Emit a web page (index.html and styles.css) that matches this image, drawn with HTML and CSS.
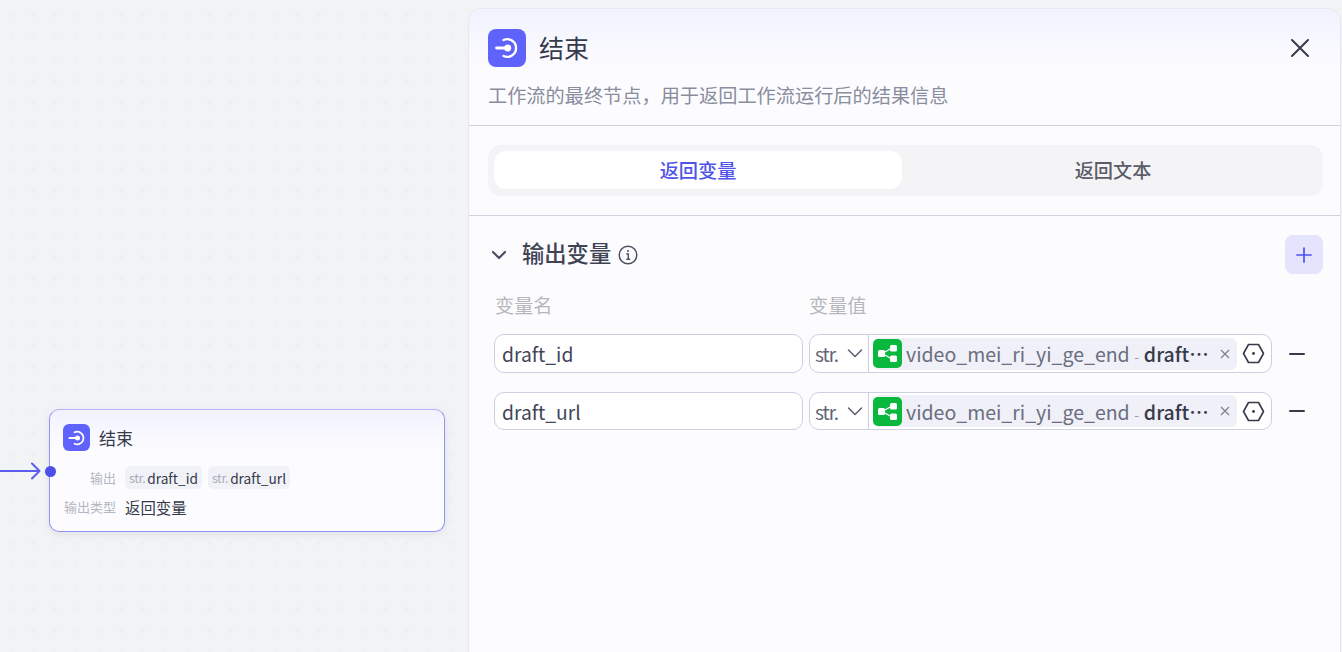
FILE: index.html
```html
<!DOCTYPE html>
<html lang="zh">
<head>
<meta charset="utf-8">
<title>结束</title>
<link rel="stylesheet" href="styles.css">
</head>
<body>
<main class="app">
  <section class="canvas">
    <svg class="edge" width="44" height="20" viewBox="0 0 44 20" fill="none" stroke="#5b5cf0" stroke-width="2" stroke-linecap="round" stroke-linejoin="round"><path d="M0 10H39M32 2.500L39.500 10L32 17.500"/></svg>
    <article class="node">
      <span class="port"></span>
      <header class="node-head">
        <span class="node-icon"><svg width="20" height="20" viewBox="0 0 20 20" fill="none"><path d="M2.500 10H10" stroke="#fff" stroke-width="2" stroke-linecap="round"/><circle cx="10.500" cy="10" r="2.500" fill="#fff"/><path d="M7.500 4.300A6.300 6.300 0 1 1 7.500 15.700" stroke="#fff" stroke-width="1.700" stroke-linecap="round"/></svg></span>
        <span class="node-title">结束</span>
      </header>
      <div class="node-row">
        <span class="node-label">输出</span>
        <div class="tags">
          <span class="tag"><i>str.</i>draft_id</span>
          <span class="tag"><i>str.</i>draft_url</span>
        </div>
      </div>
      <div class="node-row node-row-type">
        <span class="node-label">输出类型</span>
        <span class="node-value">返回变量</span>
      </div>
    </article>
  </section>

  <aside class="panel">
    <header class="panel-head">
      <div class="panel-title-row">
        <span class="panel-icon"><svg width="28" height="28" viewBox="0 0 20 20" fill="none"><path d="M2.500 10H10" stroke="#fff" stroke-width="2" stroke-linecap="round"/><circle cx="10.500" cy="10" r="2.500" fill="#fff"/><path d="M7.500 4.300A6.300 6.300 0 1 1 7.500 15.700" stroke="#fff" stroke-width="1.700" stroke-linecap="round"/></svg></span>
        <h1 class="panel-title">结束</h1>
        <svg class="close" width="20" height="20" viewBox="0 0 20 20" fill="none" stroke="#363a4a" stroke-width="2" stroke-linecap="round"><path d="M2 2L18 18M18 2L2 18"/></svg>
      </div>
      <p class="panel-desc">工作流的最终节点，用于返回工作流运行后的结果信息</p>
    </header>

    <div class="tabs-wrap">
      <div class="tabs">
        <span class="tab tab-active">返回变量</span>
        <span class="tab tab-rest">返回文本</span>
      </div>
    </div>

    <section class="vars">
      <div class="vars-head">
        <svg class="chev" width="16" height="10" viewBox="0 0 16 10" fill="none" stroke="#4b5063" stroke-width="2.200" stroke-linecap="round" stroke-linejoin="round"><path d="M2 2L8 8L14 2"/></svg>
        <h2 class="vars-title">输出变量</h2>
        <svg class="info" width="20" height="20" viewBox="0 0 20 20" fill="none" stroke="#4b5063" stroke-width="1.500"><circle cx="10" cy="10" r="8.800"/><path d="M8.300 9H10.300V14.300M8.300 14.300H12.200" stroke-width="1.400"/><circle cx="10" cy="6" r="1" fill="#4b5063" stroke="none"/></svg>
        <button class="add" type="button"><svg width="16" height="16" viewBox="0 0 16 16" fill="none" stroke="#4f50f5" stroke-width="1.700" stroke-linecap="round"><path d="M8 1V15M1 8H15"/></svg></button>
      </div>
      <div class="cols">
        <span class="col-name">变量名</span>
        <span>变量值</span>
      </div>
      <div class="var-row">
        <div class="name-input">draft_id</div>
        <div class="value-box">
          <div class="type-sel"><span class="type-text">str.</span><svg width="16" height="9" viewBox="0 0 16 9" fill="none" stroke="#5a5e6e" stroke-width="1.500" stroke-linecap="round" stroke-linejoin="round"><path d="M1.500 1L8 7.500L14.500 1"/></svg></div>
          <div class="chip">
            <span class="chip-icon"><svg width="21" height="21" viewBox="0 0 21 21" fill="#fff"><rect x="1" y="7" width="7" height="7" rx="1.500"/><rect x="13" y="2" width="7" height="6.500" rx="1.500"/><rect x="13" y="12.500" width="7" height="6.500" rx="1.500"/><path d="M7 9.500L14 5.500M7 11.500L14 15.500" stroke="#fff" stroke-width="1.400"/></svg></span>
            <span class="chip-text">video_mei_ri_yi_ge_end<em> - </em><b>draft…</b></span>
            <svg class="chip-x" width="10" height="10" viewBox="0 0 10 10" fill="none" stroke="#80838f" stroke-width="1.300"><path d="M1 1L9 9M9 1L1 9"/></svg>
          </div>
          <svg class="hex" width="23" height="21" viewBox="0 0 23 21" fill="none" stroke="#363a4a" stroke-width="1.600" stroke-linejoin="round"><path d="M6.500 1.500H16.500L21.500 10.500L16.500 19.500H6.500L1.500 10.500Z"/><circle cx="11.500" cy="10.500" r="1.400" fill="#363a4a" stroke="none"/></svg>
        </div>
        <svg class="minus" width="16" height="2" viewBox="0 0 16 2"><rect width="16" height="2" rx="1" fill="#363a4a"/></svg>
      </div>
      <div class="var-row var-row-second">
        <div class="name-input">draft_url</div>
        <div class="value-box">
          <div class="type-sel"><span class="type-text">str.</span><svg width="16" height="9" viewBox="0 0 16 9" fill="none" stroke="#5a5e6e" stroke-width="1.500" stroke-linecap="round" stroke-linejoin="round"><path d="M1.500 1L8 7.500L14.500 1"/></svg></div>
          <div class="chip">
            <span class="chip-icon"><svg width="21" height="21" viewBox="0 0 21 21" fill="#fff"><rect x="1" y="7" width="7" height="7" rx="1.500"/><rect x="13" y="2" width="7" height="6.500" rx="1.500"/><rect x="13" y="12.500" width="7" height="6.500" rx="1.500"/><path d="M7 9.500L14 5.500M7 11.500L14 15.500" stroke="#fff" stroke-width="1.400"/></svg></span>
            <span class="chip-text">video_mei_ri_yi_ge_end<em> - </em><b>draft…</b></span>
            <svg class="chip-x" width="10" height="10" viewBox="0 0 10 10" fill="none" stroke="#80838f" stroke-width="1.300"><path d="M1 1L9 9M9 1L1 9"/></svg>
          </div>
          <svg class="hex" width="23" height="21" viewBox="0 0 23 21" fill="none" stroke="#363a4a" stroke-width="1.600" stroke-linejoin="round"><path d="M6.500 1.500H16.500L21.500 10.500L16.500 19.500H6.500L1.500 10.500Z"/><circle cx="11.500" cy="10.500" r="1.400" fill="#363a4a" stroke="none"/></svg>
        </div>
        <svg class="minus" width="16" height="2" viewBox="0 0 16 2"><rect width="16" height="2" rx="1" fill="#363a4a"/></svg>
      </div>
    </section>
  </aside>
</main>
</body>
</html>
```
FILE: styles.css
```css
* { box-sizing: border-box; }
html, body { margin: 0; height: 100%; overflow: hidden; }
body {
  font-family: "Noto Sans CJK SC", "Noto Sans", sans-serif;
  background: #f2f3f5;
  color: #363a4a;
}
.app { display: flex; width: 1342px; height: 652px; }

/* canvas */
.canvas {
  position: relative;
  width: 468px;
  flex: none;
  background-color: #f2f3f5;
  background-image: radial-gradient(circle, #eeeff1 1.400px, transparent 2px);
  background-size: 22px 22px;
  background-position: 0 4px;
}
.edge { position: absolute; left: 0; top: 461px; }
.node {
  position: absolute;
  left: 49px;
  top: 409px;
  width: 396px;
  height: 123px;
  padding: 14px 14px 0 13px;
  border: 1px solid #9393f5;
  border-top-color: #b4b4f8;
  border-radius: 10px;
  background: linear-gradient(#f2f2ff 0, #fcfcff 40px);
  box-shadow: 0 2px 8px rgba(30, 30, 80, .08);
}
.port {
  position: absolute;
  left: -5px;
  top: 56px;
  width: 11px;
  height: 11px;
  border-radius: 50%;
  background: #4d50e8;
}
.node-head { display: flex; align-items: center; gap: 9px; height: 27px; }
.node-icon {
  width: 27px;
  height: 27px;
  border-radius: 6px;
  background: #5f62fb;
  display: flex;
  align-items: center;
  justify-content: center;
}
.node-title { font-size: 17px; line-height: 27px; color: #363a4a; }
.node-row {
  display: grid;
  grid-template-columns: 53px 1fr;
  column-gap: 9px;
  align-items: center;
  margin-top: 15px;
  height: 23px;
}
.node-row-type { margin-top: 6px; }
.node-label { font-size: 13px; color: #b4b6c2; text-align: right; white-space: nowrap; }
.tags { display: flex; gap: 6px; }
.tag {
  display: inline-flex;
  align-items: center;
  height: 23px;
  padding: 0 4px;
  border-radius: 5px;
  background: #f1f2f8;
  font-size: 13.700px;
  color: #363a4a;
  white-space: nowrap;
}
.tag i { font-style: normal; color: #a9acbd; margin-right: 2px; font-size: 12.500px; letter-spacing: -.4px; }
.node-value { font-size: 15.400px; color: #363a4a; white-space: nowrap; }

/* panel */
.panel {
  width: 873px;
  flex: none;
  margin-top: 8px;
  height: 644px;
  border: 1px solid #e6e7f0;
  border-bottom: 0;
  border-radius: 14px 14px 0 0;
  background: #fcfcff;
}
.panel-head {
  height: 117px;
  padding: 19px 19px 0;
  border-bottom: 1px solid #d2d2de;
  background: linear-gradient(#f2f2ff 0, #fcfcff 62px);
  border-radius: 14px 14px 0 0;
}
.panel-title-row { display: flex; align-items: center; height: 39px; }
.panel-icon {
  width: 38px;
  height: 38px;
  border-radius: 8px;
  background: #5f62fb;
  display: flex;
  align-items: center;
  justify-content: center;
  flex: none;
}
.panel-title { margin: 0 0 0 13px; flex: 1; font-size: 25px; font-weight: 400; line-height: 39px; color: #363a4a; }
.close { margin-right: 11px; }
.panel-desc { margin: 14px 0 0; font-size: 19.200px; line-height: 28px; color: #8a8d9d; white-space: nowrap; }

.tabs-wrap { height: 90px; padding: 19px 17px 0 19px; border-bottom: 1px solid #d2d2de; }
.tabs {
  display: flex;
  height: 51px;
  padding: 6px;
  border-radius: 13px;
  background: #f4f4f6;
}
.tab {
  flex: 1;
  display: flex;
  align-items: center;
  justify-content: center;
  height: 38px;
  padding-bottom: 1px;
  font-size: 19.200px;
  font-weight: 500;
  color: #5a5c68;
}
.tab-rest { padding-left: 7px; }
.tab-active { flex: none; width: 408px; background: #fff; border-radius: 12px; color: #5054ea; }

.vars { padding: 19px 17px 0 19px; }
.vars-head { display: flex; align-items: center; height: 39px; }
.chev { margin-left: 3px; }
.vars-title { margin: 0 0 0 15px; font-size: 22.300px; font-weight: 500; color: #3f4354; line-height: 35px; height: 39px; }
.info { margin-left: 7px; }
.add {
  margin-left: auto;
  width: 38px;
  height: 39px;
  padding: 0;
  border: 0;
  border-radius: 8px;
  background: #e4e4fc;
  display: flex;
  align-items: center;
  justify-content: center;
}
.cols { display: flex; margin-top: 17px; height: 29px; font-size: 19.200px; line-height: 28px; color: #b6b6bc; }
.col-name { width: 321px; padding-left: 7px; }
.var-row { display: flex; align-items: center; height: 39px; padding-left: 6px; }
.cols + .var-row { margin-top: 14px; }
.var-row-second { height: 38px; margin-top: 19px; }
.name-input {
  width: 309px;
  height: 100%;
  padding-left: 7px;
  border: 1px solid #cdcfe2;
  border-radius: 10px;
  background: #fff;
  font-size: 19.300px;
  line-height: 38px;
  color: #414557;
}
.value-box {
  display: flex;
  align-items: center;
  width: 463px;
  height: 100%;
  margin-left: 6px;
  border: 1px solid #cdcfe2;
  border-radius: 10px;
  background: #fff;
}
.type-sel {
  display: flex;
  align-items: center;
  justify-content: space-between;
  width: 59px;
  height: 100%;
  padding: 0 5px;
  flex: none;
  border-right: 1px solid #cdcfe2;
  font-size: 19px;
  color: #5f6373;
}
.type-text { letter-spacing: -1px; }
.chip {
  display: flex;
  align-items: center;
  width: 364px;
  height: 32px;
  margin-left: 4px;
  flex: none;
  border-radius: 6px;
  background: #f0f0f8;
  font-size: 19.500px;
  white-space: nowrap;
}
.chip-icon {
  width: 29px;
  height: 29px;
  flex: none;
  border-radius: 5px;
  background: #0ab83e;
  display: flex;
  align-items: center;
  justify-content: center;
}
.chip-text { margin-left: 4px; flex: 1; color: #6a6e80; }
.chip-text em { font-style: normal; font-size: 14px; color: #9a9dab; margin: 0 1.500px; }
.chip-text b { font-weight: 500; color: #363a4a; }
.chip-x { margin-right: 7px; flex: none; }
.hex { margin-left: 5px; flex: none; }
.minus { margin-left: 17px; flex: none; }
```
